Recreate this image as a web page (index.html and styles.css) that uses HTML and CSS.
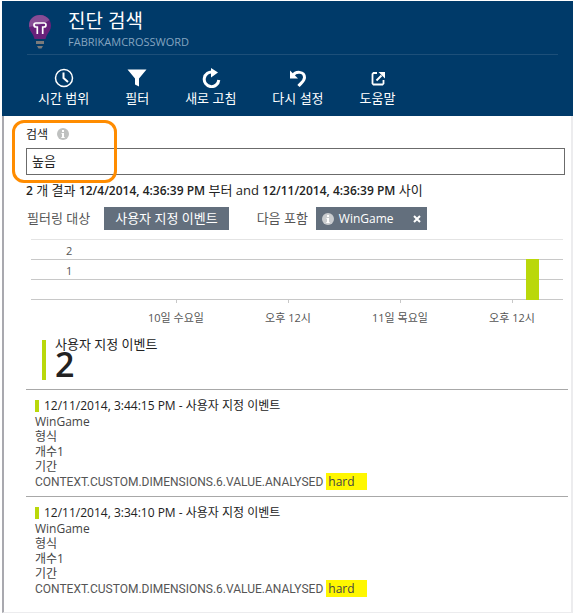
FILE: index.html
```html
<!DOCTYPE html>
<html lang="ko">
<head>
<meta charset="utf-8">
<title>진단 검색</title>
<link rel="stylesheet" href="styles.css">
</head>
<body>
<div class="blade">
  <header class="header">
    <div class="title-row">
      <svg class="bulb" viewBox="0 0 24 36" aria-hidden="true">
        <path fill="#68217a" d="M12 1C5.600 1 1 5.600 1 11.500c0 4 2 6.300 3.700 9 1.100 1.800 1.300 3.200 1.800 4.500h11c.5-1.300.7-2.700 1.800-4.500 1.700-2.700 3.700-5 3.700-9C23 5.600 18.400 1 12 1z"/>
        <path fill="#874d95" d="M12 1C5.600 1 1 5.600 1 11.500l.2 1.500C7 12 16 10 21.500 6 19.500 3 16 1 12 1z"/>
        <path fill="none" stroke="#fff" stroke-width="1.700" d="M9.300 20v-7H8a2 2 0 0 1 0-4h8a2 2 0 0 1 0 4h-1.300v7"/>
        <path fill="#7a7a7a" d="M8 27h8v3H8zM9 32h6l-1.500 2.500h-3z"/>
      </svg>
      <div class="titles">
        <h1>진단 검색</h1>
        <p>FABRIKAMCROSSWORD</p>
      </div>
    </div>
    <nav class="commands">
      <button type="button">
        <svg viewBox="0 0 20 20" aria-hidden="true"><circle cx="10" cy="10" r="8.500" fill="none" stroke="#fff" stroke-width="1.500"/><path d="M9.500 4.500V10l4.500 4" fill="none" stroke="#fff" stroke-width="2"/></svg>
        시간 범위
      </button>
      <button type="button">
        <svg viewBox="0 0 20 20" aria-hidden="true"><path fill="#fff" d="M.5 1.500h19L12 10.500v8l-4-2v-6z"/></svg>
        필터
      </button>
      <button type="button">
        <svg viewBox="0 0 20 20" aria-hidden="true"><path d="M12 4.200A7.300 7.300 0 1 0 17.800 12" fill="none" stroke="#fff" stroke-width="3"/><path fill="#fff" d="M10 0l7 4.500-7 5z"/></svg>
        새로 고침
      </button>
      <button type="button">
        <svg viewBox="0 0 20 20" aria-hidden="true"><path d="M5 7.500C7.500 3 16.500 3 16.500 9.500c0 3.500-3 5-6 8.500" fill="none" stroke="#fff" stroke-width="3"/><path fill="#fff" d="M2 2.500l8 8H2z"/></svg>
        다시 설정
      </button>
      <button type="button">
        <svg viewBox="0 0 20 20" aria-hidden="true"><path d="M9 5H5.500L4.500 6v9.500l1 1h9l1-1V12" fill="none" stroke="#fff" stroke-width="1.800"/><path d="M8.500 12.500l5-5" stroke="#fff" stroke-width="2"/><path fill="#fff" d="M10.500 4H17v6.500z"/></svg>
        도움말
      </button>
    </nav>
  </header>

  <main class="content">
    <section class="search">
      <div class="search-label">
        <label for="query">검색</label>
        <svg class="info" viewBox="0 0 12 12" aria-hidden="true"><circle cx="6" cy="6" r="6" fill="#bfc1c0"/><path fill="#fff" d="M5 2h2v2H5zM4.500 5H7v4h.7v1H4.300V9H5V6h-.5z"/></svg>
      </div>
      <input id="query" type="text" value="높음">
      <span class="highlight-ring"></span>
    </section>

    <p class="summary"><b>2</b> 개 결과 <b>12/4/2014, 4:36:39 PM</b> 부터 and <b>12/11/2014, 4:36:39 PM</b> 사이</p>

    <div class="filters">
      <span>필터링 대상</span>
      <button type="button" class="chip chip-type">사용자 지정 이벤트</button>
      <span class="contains">다음 포함</span>
      <button type="button" class="chip chip-term">
        <svg class="info" viewBox="0 0 12 12" aria-hidden="true"><circle cx="6" cy="6" r="6" fill="#c9cccf"/><path fill="#fff" d="M5 2h2v2H5zM4.500 5H7v4h.7v1H4.300V9H5V6h-.5z"/></svg>
        <span>WinGame</span>
        <svg class="close" viewBox="0 0 8 8" aria-hidden="true"><path d="M1 1l6 6M7 1L1 7" stroke="#fff" stroke-width="2"/></svg>
      </button>
    </div>

    <section class="chart">
      <div class="plot">
        <div class="level">2</div>
        <div class="level">1</div>
        <div class="level"></div>
        <span class="bar"></span>
      </div>
      <div class="axis">
        <span></span>
        <span class="tick">10일 수요일</span>
        <span class="tick">오후 12시</span>
        <span class="tick">11일 목요일</span>
        <span class="tick">오후 12시</span>
      </div>
    </section>

    <section class="total">
      <h2>사용자 지정 이벤트</h2>
      <strong>2</strong>
    </section>

    <article class="event">
      <h3>12/11/2014, 3:44:15 PM - 사용자 지정 이벤트</h3>
      <p>WinGame</p>
      <p>형식</p>
      <p>개수1</p>
      <p>기간</p>
      <p class="dimension">CONTEXT.CUSTOM.DIMENSIONS.6.VALUE.ANALYSED <mark>hard</mark></p>
    </article>
    <article class="event">
      <h3>12/11/2014, 3:34:10 PM - 사용자 지정 이벤트</h3>
      <p>WinGame</p>
      <p>형식</p>
      <p>개수1</p>
      <p>기간</p>
      <p class="dimension">CONTEXT.CUSTOM.DIMENSIONS.6.VALUE.ANALYSED <mark>hard</mark></p>
    </article>
  </main>
</div>
</body>
</html>
```
FILE: styles.css
```css
* { box-sizing: border-box; }
body {
  margin: 0;
  background: #fff;
  color: #222;
  font: 12px/15px "Open Sans", "Noto Sans CJK KR", sans-serif;
}
h1, h2, h3, p { margin: 0; font-weight: 400; }
button, input { font: inherit; }
svg { display: block; flex: none; }

.blade { padding: 1px 0 2px 2px; }

.header {
  height: 115px;
  padding: 8px 15px 0 25px;
  background: #003a69;
  color: #fff;
}
.title-row {
  display: flex;
  gap: 15px;
  height: 46px;
  border-bottom: 1px solid #1d4f79;
}
.bulb { width: 26px; height: 36px; margin-top: 5px; }
.titles { padding-top: 1px; }
h1 { font-size: 19px; line-height: 22px; }
.titles p { margin-top: 2px; font-size: 11px; color: #85a5c0; }
.commands {
  display: flex;
  gap: 36px;
  padding: 13px 0 0 11px;
}
.commands button {
  display: flex;
  flex-direction: column;
  align-items: center;
  gap: 3px;
  padding: 0;
  border: 0;
  background: none;
  color: #fff;
  font-size: 13px;
  white-space: nowrap;
}
.commands svg { width: 20px; height: 20px; }

.content {
  padding: 10px 3px 9px 22px;
  border: solid #ececee;
  border-width: 0 2px 1px 0;
  border-left: 2px solid #a9a9af;
}

.search { position: relative; margin-right: 3px; }
.search-label { display: flex; align-items: center; gap: 9px; height: 16px; }
.info { width: 12px; height: 12px; }
.search input {
  display: block;
  width: 100%;
  height: 27px;
  margin-top: 6px;
  padding: 0 5px 3px;
  border: 1px solid #6b6b6b;
  border-radius: 0;
  background: #fff;
  color: #222;
  font-size: 13px;
}
.highlight-ring {
  position: absolute;
  top: -6px;
  left: -14px;
  width: 105px;
  height: 63px;
  border: 3px solid #ff8c00;
  border-radius: 12px;
  pointer-events: none;
}
.summary { margin-top: 8px; font-size: 13px; }
.summary b { font-size: 12px; font-weight: 600; }

.filters {
  display: flex;
  align-items: center;
  margin-top: 9px;
  padding-left: 1px;
  color: #555;
  font-size: 13px;
}
.chip {
  height: 23px;
  padding: 0 11px;
  border: 0;
  background: #636f7d;
  color: #fff;
}
.chip-type { margin-left: 14px; }
.contains { margin: 0 8px 0 28px; }
.chip-term {
  display: flex;
  align-items: center;
  gap: 5px;
  padding: 0 6px;
  font-size: 12px;
}
.close { width: 8px; height: 8px; margin-left: 14px; }

.chart { margin: 9px 5px 0; color: #555; font-size: 11px; }
.plot { position: relative; border-top: 1px solid #e4e4e4; }
.level {
  height: 20px;
  padding: 3px 0 0 35px;
  border-bottom: 1px solid #c8c8c8;
}
.bar {
  position: absolute;
  bottom: 0;
  left: 93%;
  width: 13px;
  height: 41px;
  background: #bad80a;
}
.axis {
  display: grid;
  grid-template-columns: 89fr repeat(4, 112fr);
  margin-right: -5px;
}
.tick { text-align: center; white-space: nowrap; }
.tick::before {
  content: "";
  display: block;
  width: 1px;
  height: 3px;
  margin: 0 auto 7px;
  background: #c8c8c8;
}

.total {
  margin: 15px 0 9px 16px;
  padding-left: 9px;
  border-left: 4px solid #bad80a;
}
.total h2 { font-size: 13px; line-height: 8px; }
.total strong { display: block; font-size: 34px; line-height: 32px; font-weight: 600; }

.event {
  padding: 7px 0 6px 9px;
  border-top: 1px solid #a8a8a8;
  color: #444;
}
.event h3 {
  display: flex;
  align-items: center;
  gap: 5px;
  height: 17px;
  font-size: 12px;
  color: #222;
}
.event h3::before {
  content: "";
  width: 4px;
  height: 12px;
  background: #bad80a;
}
.dimension { color: #555; font-family: Roboto, "Noto Sans CJK KR", sans-serif; }
mark {
  padding: 0 12px 0 2px;
  background: #fff700;
  color: #444;
  font-family: "Open Sans", sans-serif;
}
```
